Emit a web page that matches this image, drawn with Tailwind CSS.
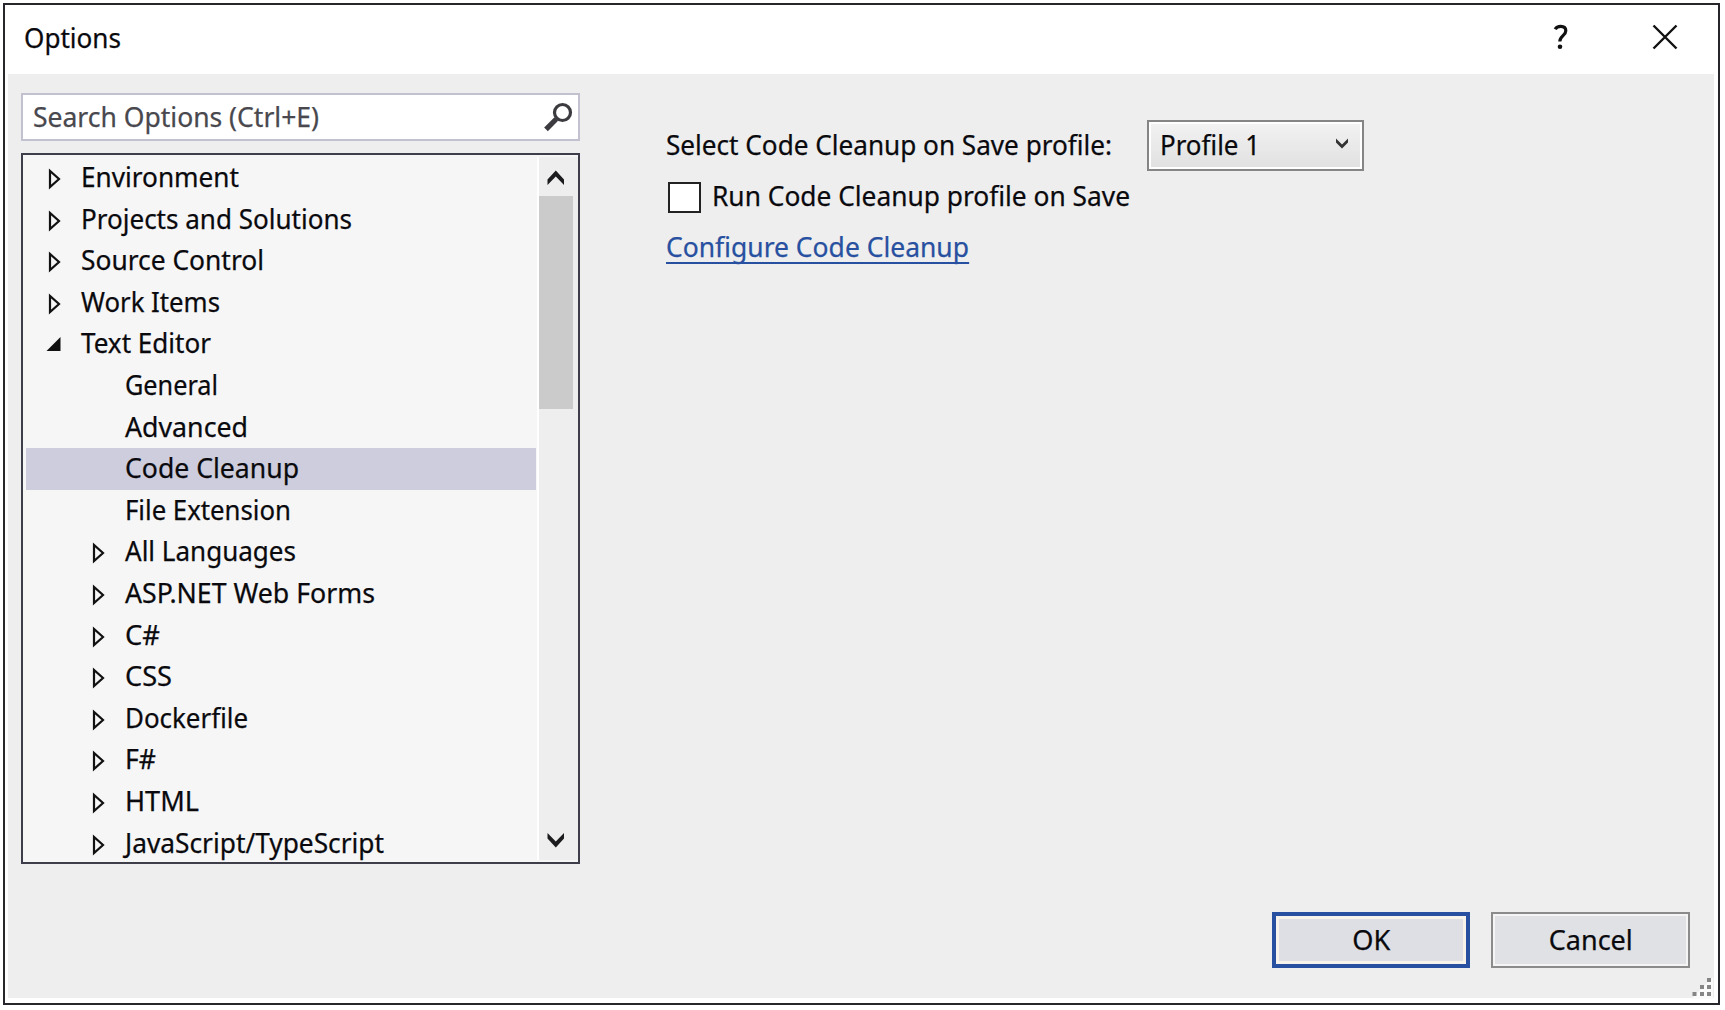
<!DOCTYPE html>
<html lang="en">
<head>
<meta charset="utf-8">
<title>Options</title>
<script src="https://cdn.jsdelivr.net/npm/@tailwindcss/browser@4"></script>
</head>
<body class="h-[1010px] w-[1725px] overflow-hidden bg-white pt-[3px] pl-[3px] font-['Noto_Sans','Open_Sans',sans-serif] text-[27.5px] leading-[40px] text-[#0a0a0e] [-webkit-text-stroke:0.25px]">
<div class="relative flex h-[1002px] w-[1717px] flex-col border-2 border-[#26262b] bg-white pr-[4px] pb-[5px] pl-[3px]">
  <header class="flex h-[69px] shrink-0 items-start pt-[12px] pl-[16px]">
    <h1 class="flex-1 pt-[1px]"><span data-w="97" class="inline-block origin-left whitespace-pre">Options</span></h1>
    <svg class="mt-[6px] mr-[83px]" width="16" height="28" viewBox="0 0 16 28" fill="none" stroke="#111" stroke-width="3.2"><path d="M2.2 6.2C3.5 3.8 6 3.4 7.8 3.4c3.2 0 5 1.700 5 4.400 0 4.700-6 5-6 10.700"/><circle cx="7" cy="23.800" r="2.300" fill="#111" stroke="none"/></svg>
    <svg class="mt-[6px] mr-[36px]" width="26" height="28" viewBox="0 0 26 28" fill="none" stroke="#111" stroke-width="2.400"><path d="M1.500 2.500L24.500 25.500M24.500 2.500L1.500 25.500"/></svg>
  </header>

  <div class="flex flex-1 bg-[#eeeeee] pt-[19px] pl-[13px]">
    <div class="w-[559px] shrink-0">
      <div class="flex h-[48px] justify-between border-2 border-[#c1c1d0] bg-white pl-[10px] text-[#48484e]">
        <span data-w="286" class="mt-[2px] inline-block origin-left whitespace-pre">Search Options (Ctrl+E)</span>
        <svg class="mt-[6px] mr-[3px] shrink-0" width="32" height="32" viewBox="0 0 32 32" fill="none" stroke="#3c3c40"><circle cx="19.500" cy="11.500" r="8" stroke-width="3.200"/><path d="M13.300 18L3 28.300" stroke-width="5.200"/></svg>
      </div>
      <div class="mt-[12px] flex h-[711px] border-2 border-[#3e3e4a] bg-[#f6f6f6] pt-[2px]">
        <ul id="tree" class="w-[514px] shrink-0 pl-[3px]"></ul>
        <div class="flex h-[703px] flex-1 flex-col items-start border-l-2 border-white bg-[#eeeeee]">
          <svg class="shrink-0" width="34" height="39" viewBox="0 0 34 39"><path d="M8.500 22.500L16.800 13.500L25 22.500V28L16.800 19.500L8.500 28Z" fill="#1c1c1e"/></svg>
          <div class="h-[213px] w-[34px] shrink-0 bg-[#cbcbcb]"></div>
          <div class="flex-1"></div>
          <svg class="shrink-0" width="34" height="41" viewBox="0 0 34 41"><path d="M8.500 14L16.800 22.500L25 14V19.500L16.800 28.500L8.500 19.500Z" fill="#1c1c1e"/></svg>
        </div>
      </div>
    </div>

    <div class="flex flex-1 flex-col pl-[86px]">
      <div class="mt-[27px] flex h-[51px]">
        <label class="mt-[5px] w-[481px] shrink-0"><span data-w="446" class="inline-block origin-left whitespace-pre">Select Code Cleanup on Save profile:</span></label>
        <div class="flex h-[51px] w-[217px] justify-between border-2 border-[#858585] bg-white p-[2px]">
          <div class="flex flex-1 justify-between bg-gradient-to-b from-[#f2f2f2] to-[#e1e1e1] pl-[9px]">
            <span data-w="100" class="mt-[1px] inline-block origin-left whitespace-pre">Profile 1</span>
            <svg class="mt-[12px] mr-[10px] shrink-0" width="16" height="14" viewBox="0 0 16 14"><path d="M2 2.500L8 8.500L14 2.500V6.500L8 12.500L2 6.500Z" fill="#333"/></svg>
          </div>
        </div>
      </div>
      <div class="mt-[5px] flex h-[40px] pl-[2px]">
        <div class="mt-[6px] h-[31px] w-[33px] border-2 border-[#222] bg-white"></div>
        <span data-w="418" class="ml-[11px] inline-block origin-left whitespace-pre">Run Code Cleanup profile on Save</span>
      </div>
      <a class="mt-[11px] block text-[#2850a0]"><span data-w="303" class="inline-block h-[37px] origin-left border-b-[2.5px] border-[#2850a0] whitespace-pre">Configure Code Cleanup</span></a>
      <div class="flex-1"></div>
      <div class="mb-[30px] flex justify-end gap-[21px] pr-[24px] text-center">
        <div class="h-[56px] w-[198px] border-4 border-[#2850a0] bg-[#f8f3ea] p-[3px]"><div class="h-full bg-[#dddfe4] leading-[42px]"><span data-w="38" class="inline-block whitespace-pre">OK</span></div></div>
        <div class="h-[56px] w-[199px] border-2 border-[#8b8b8b] bg-[#f4f4f4] p-[2px]"><div class="h-full bg-[#dfe1e4] leading-[48px]"><span data-w="84" class="inline-block whitespace-pre">Cancel</span></div></div>
      </div>
    </div>
  </div>
  <svg class="absolute right-[5px] bottom-[4px]" width="22" height="22" viewBox="0 0 22 22"><path d="M0 22L22 0V22Z" fill="#fafafa"/><g fill="#858585"><path d="M16 1h4v4h-4zM9 8h4v4h-4zM16 8h4v4h-4zM1.500 15h4v4h-4zM9 15h4v4h-4zM16 15h4v4h-4z"/></g></svg>
</div>
<script>
// label, width in px, depth, state: c = collapsed, e = expanded, blank = leaf
const rows = [
  ["Environment",158,0,"c"],["Projects and Solutions",271,0,"c"],["Source Control",183,0,"c"],["Work Items",139,0,"c"],["Text Editor",130,0,"e"],
  ["General",93,1,""],["Advanced",123,1,""],["Code Cleanup",174,1,""],["File Extension",166,1,""],
  ["All Languages",171,1,"c"],["ASP.NET Web Forms",250,1,"c"],["C#",35,1,"c"],["CSS",47,1,"c"],["Dockerfile",123,1,"c"],["F#",31,1,"c"],["HTML",74,1,"c"],["JavaScript/TypeScript",259,1,"c"]
];
const icons = {
  c: '<path d="M4 14V30L13 22Z" fill="none" stroke="#111" stroke-width="2.2"/>',
  e: '<path d="M14.500 14V28H0.500Z" fill="#111"/>',
  "": ''
};
document.getElementById("tree").innerHTML = rows.map(([t, w, d, s]) =>
  `<li class="flex h-[41.6px] w-[510px] ${d ? "pl-[64px]" : "pl-[20px]"} ${t === "Code Cleanup" ? "bg-[#cdcddd]" : ""}">
    <svg class="shrink-0" width="16" height="41" viewBox="0 0 16 41">${icons[s]}</svg>
    <span data-w="${w}" class="${d ? "ml-[18.5px]" : "ml-[19px]"} inline-block h-[40px] leading-[40px] origin-left whitespace-pre">${t}</span>
  </li>`).join("");
// squeeze each label horizontally to its designed width
const pen = document.createElement("canvas").getContext("2d");
pen.font = '27.5px "Noto Sans"';
document.querySelectorAll("[data-w]").forEach(e => {
  e.style.transform = `scaleX(${e.dataset.w / pen.measureText(e.textContent).width})`;
});
</script>
</body>
</html>
